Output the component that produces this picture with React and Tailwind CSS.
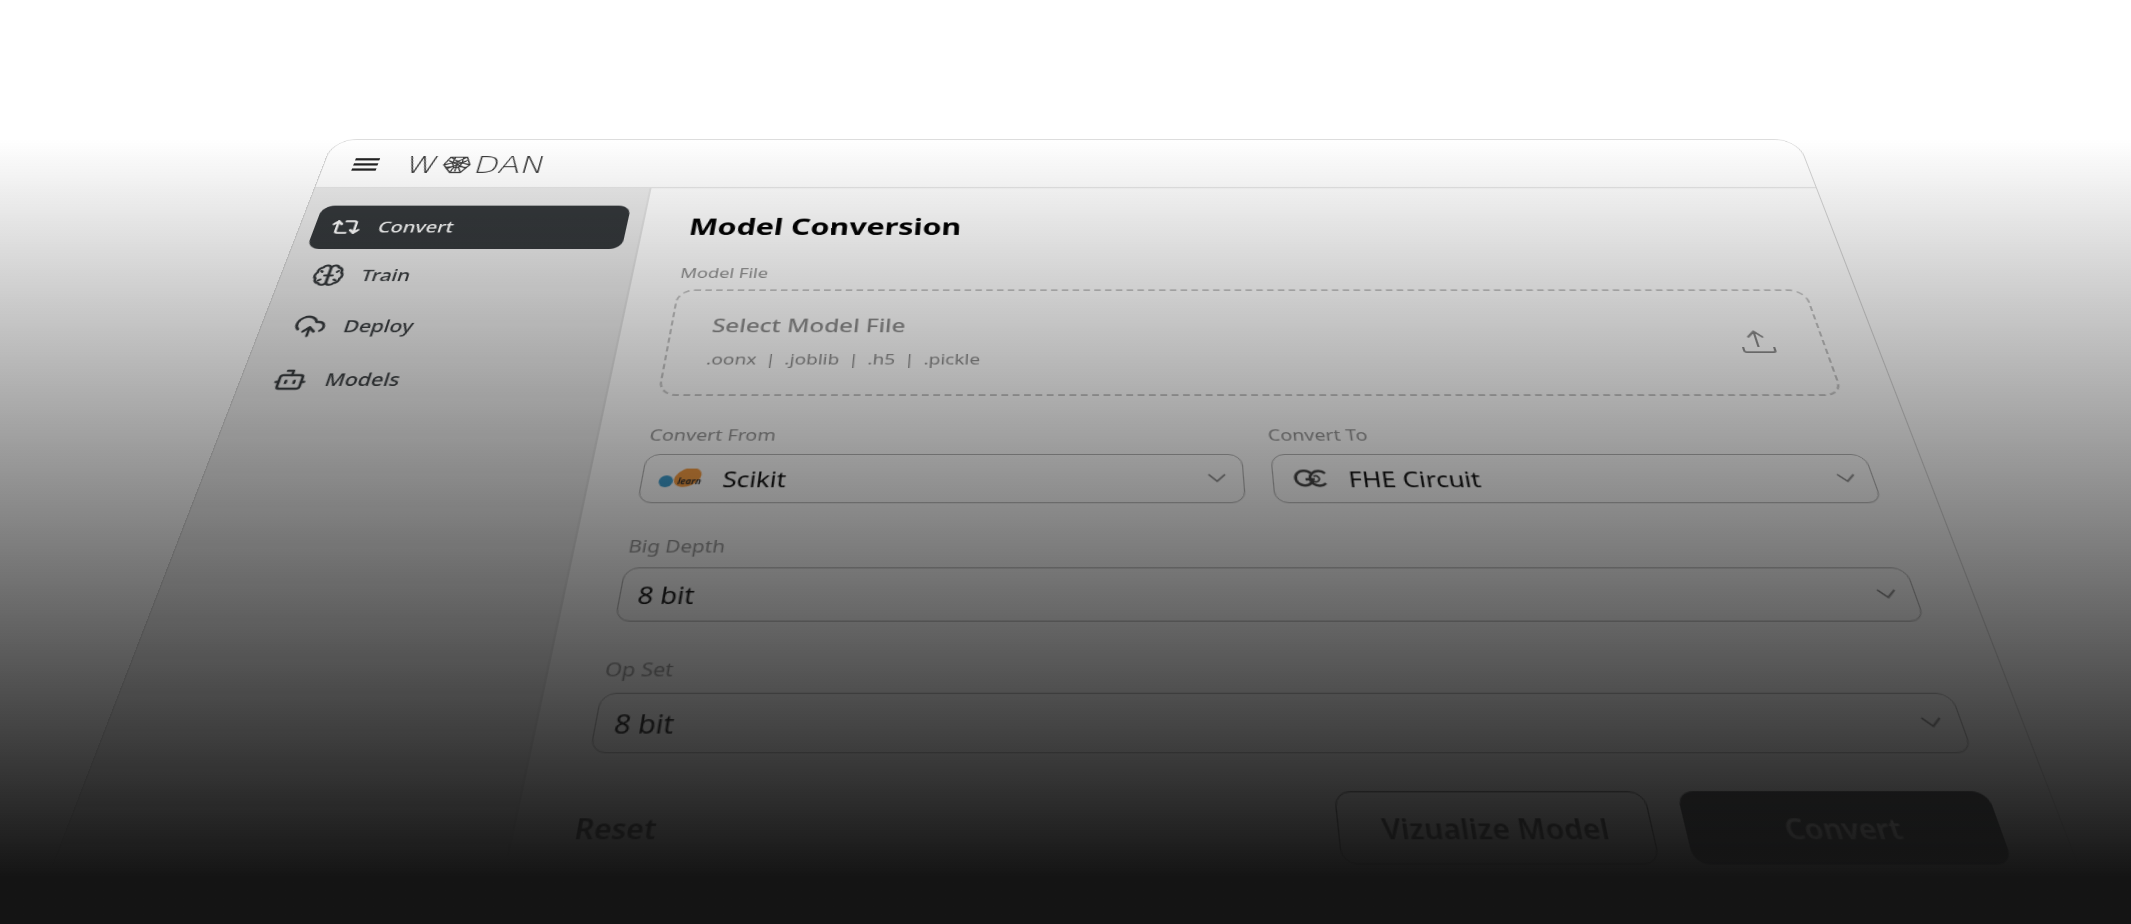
import React, { useState } from 'react';
import { Repeat2, CloudUpload, Bot } from 'lucide-react';

function BrainIcon({ className, strokeWidth }) {
    return (
        <svg
            viewBox="0 0 24 24"
            className={className}
            fill="none"
            stroke="currentColor"
            strokeWidth={strokeWidth}
            strokeLinecap="round"
            strokeLinejoin="round"
            aria-hidden="true"
        >
            <path d="M12 5a3 3 0 0 0-5.8-.8A3.6 3.6 0 0 0 3.2 9 4 4 0 0 0 3 15a3.8 3.8 0 0 0 3.4 4.6A3 3 0 0 0 12 19z" />
            <path d="M12 5a3 3 0 0 1 5.8-.8A3.6 3.6 0 0 1 20.8 9 4 4 0 0 1 21 15a3.8 3.8 0 0 1-3.4 4.6A3 3 0 0 1 12 19z" />
            <path d="M9 12h6M6.500 8.500l-1-1M17.500 8.500l1-1M7 16l-1.500 1M17 16l1.500 1" />
        </svg>
    );
}

const navItems = [
    { id: 'convert', label: 'Convert', icon: Repeat2 },
    { id: 'train', label: 'Train', icon: BrainIcon },
    { id: 'deploy', label: 'Deploy', icon: CloudUpload },
    { id: 'models', label: 'Models', icon: Bot },
];

function Wordmark() {
    return (
        <a
            href="#home"
            aria-label="Wodan"
            className="flex items-center gap-1 font-['DejaVu_Sans',sans-serif] text-[32px] leading-none font-extralight text-[#3a3a3a]"
        >
            <span>W</span>
            <svg viewBox="0 0 24 24" className="size-7" fill="none" stroke="currentColor" strokeWidth="1.2" aria-hidden="true">
                <path d="M5 3h14l4 9-6 9H8l-7-9z" />
                <path d="M5 3l7 5 7-5M1 12l7-2M23 12l-7-2M8 21l2-6M17 21l-3-6M4 7l16 9M20 7L4 17M12 8v12M9 3l-1 7M16 3v7M3 15l7-1M21 15l-7-1" />
                <path d="M8 10l4-2 4 2-2 5h-4z" />
            </svg>
            <span>DAN</span>
        </a>
    );
}

function ScikitLogo() {
    return (
        <svg viewBox="0 0 38 20" className="h-5 w-[38px]" aria-hidden="true">
            <circle cx="6" cy="13" r="6" fill="#3499cd" />
            <ellipse cx="24" cy="9" rx="12" ry="9" transform="rotate(-30 24 9)" fill="#f89939" />
            <text x="16" y="16" fontSize="8" fontWeight="700" fontStyle="italic" fill="#222">learn</text>
        </svg>
    );
}

function CircuitLogo() {
    return (
        <svg viewBox="-3 0 34 20" className="h-5 w-[34px]" fill="none" stroke="#3a3a3a" strokeWidth="2.5" aria-hidden="true">
            <path d="M15 5a7.500 7.500 0 1 0 1.500 6H10" />
            <path d="M27 5a7.500 7.500 0 1 0 0 10" />
            <path d="M17 8a3 3 0 1 1 0 5" strokeWidth="1.5" />
        </svg>
    );
}

function SelectField({ id, label, option, logo }) {
    return (
        <div className="flex flex-1 flex-col gap-2">
            <label htmlFor={id} className="text-[17px] leading-6 text-[#8f8f8f]">{label}</label>
            <div className="flex h-[50px] items-center rounded-xl border border-[#b0b0b0] px-3.5">
                {logo && <span className="mr-4 shrink-0">{logo}</span>}
                <select id={id} className="h-full min-w-0 flex-1 appearance-none bg-transparent text-[22px] text-black outline-none">
                    <option>{option}</option>
                </select>
                <svg viewBox="0 0 16 10" className="h-2.5 w-4 shrink-0" fill="none" stroke="#7a7a7a" strokeWidth="1.5" aria-hidden="true">
                    <path d="M1 1l7 7 7-7" />
                </svg>
            </div>
        </div>
    );
}

function Sidebar({ activeTab, setActiveTab }) {
    return (
        <aside className="w-[328px] shrink-0 border-r-2 border-[#e3e3e3] bg-[#ececec] pt-[23px] pr-3.5 pl-3.5">
            <nav className="flex flex-col gap-[5px]">
                {navItems.map((item) => {
                    const Icon = item.icon;
                    const active = activeTab === item.id;
                    return (
                        <button
                            key={item.id}
                            onClick={() => setActiveTab(item.id)}
                            className={`flex h-14 w-full items-center gap-4 rounded-xl px-[15px] text-[19px] font-medium
                ${active ? 'bg-[#33373a] text-white' : 'text-[#33373a]'}`}
                        >
                            <Icon className="size-[30px] shrink-0" strokeWidth={2} />
                            {item.label}
                        </button>
                    );
                })}
            </nav>
        </aside>
    );
}

function ConversionForm() {
    return (
        <main className="min-w-0 flex-1 pt-[30px] pr-[46px] pb-12 pl-11">
            <h1 className="text-[29px] leading-10 font-bold text-black">Model Conversion</h1>
            <form className="mt-[27px] flex flex-col gap-[30px]" onSubmit={(e) => e.preventDefault()}>
                <div className="flex flex-col gap-2">
                    <span className="text-[17px] leading-6 text-[#8f8f8f]">Model File</span>
                    <button
                        type="button"
                        className="flex h-[123px] items-center justify-between rounded-2xl border-2 border-dashed border-[#c4c4c4] pr-11 pl-9 text-left text-[#8a8a8a]"
                    >
                        <span className="flex flex-col gap-2">
                            <span className="text-[22px] leading-8 font-medium">Select Model File</span>
                            <span className="flex gap-2 text-[17px] leading-8">
                                <span>.oonx</span>
                                <span>|</span>
                                <span>.joblib</span>
                                <span>|</span>
                                <span>.h5</span>
                                <span>|</span>
                                <span>.pickle</span>
                            </span>
                        </span>
                        <svg viewBox="0 0 30 26" className="h-[26px] w-[30px]" fill="none" stroke="currentColor" strokeWidth="2" aria-hidden="true">
                            <path d="M15 19V2M8 8l7-7 7 7M1 19v4a2 2 0 0 0 2 2h24a2 2 0 0 0 2-2v-4" />
                        </svg>
                    </button>
                </div>
                <div className="flex gap-6">
                    <SelectField id="from" label="Convert From" option="Scikit" logo={<ScikitLogo />} />
                    <SelectField id="to" label="Convert To" option="FHE Circuit" logo={<CircuitLogo />} />
                </div>
                <SelectField id="depth" label="Big Depth" option="8 bit" />
                <SelectField id="opset" label="Op Set" option="8 bit" />
                <div className="flex h-14 items-center gap-6 text-[22px] font-semibold">
                    <button type="reset" className="mr-auto text-[#222]">Reset</button>
                    <button type="button" className="h-full w-[231px] rounded-xl border border-[#555] text-[#222]">
                        Vizualize Model
                    </button>
                    <button type="submit" className="h-full w-[231px] rounded-xl bg-[#26292b] text-[#ddd]">
                        Convert
                    </button>
                </div>
            </form>
        </main>
    );
}

export default function App() {
    const [activeTab, setActiveTab] = useState('convert');

    return (
        <div className="relative h-screen overflow-hidden bg-white pt-[139px] font-['Noto_Sans','Open_Sans',sans-serif]">
            <div className="mx-auto w-11/16 origin-top overflow-hidden rounded-t-3xl border border-[#d4d4d4] bg-white [transform:perspective(1894px)_rotateX(45deg)]">
                <header className="flex h-[67px] items-center gap-7 border-b-2 border-[#e8e8e8] pt-1 pl-[29px]">
                    <button aria-label="Menu" className="flex w-6 flex-col gap-1">
                        <span className="h-[3px] bg-[#222]" />
                        <span className="h-[3px] bg-[#222]" />
                        <span className="h-[3px] bg-[#222]" />
                    </button>
                    <Wordmark />
                </header>
                <div className="flex">
                    <Sidebar activeTab={activeTab} setActiveTab={setActiveTab} />
                    <ConversionForm />
                </div>
            </div>
            {/* fade to black over the whole scene */}
            <div className="pointer-events-none absolute inset-0 bg-linear-to-b from-[#14141400] from-15% to-[#141414] to-95%" />
        </div>
    );
}
